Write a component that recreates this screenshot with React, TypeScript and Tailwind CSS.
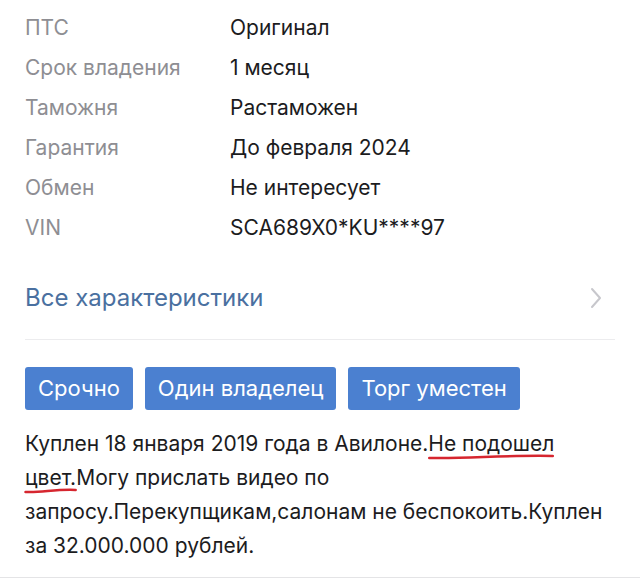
import React from "react";

const rows: [string, string][] = [
  ["ПТС", "Оригинал"],
  ["Срок владения", "1 месяц"],
  ["Таможня", "Растаможен"],
  ["Гарантия", "До февраля 2024"],
  ["Обмен", "Не интересует"],
  ["VIN", "SCA689X0*KU****97"],
];

const tags = ["Срочно", "Один владелец", "Торг уместен"];

// red marker stroke under a phrase
const Marker = ({ children }: { children: React.ReactNode }) => (
  <span className="relative">
    {children}
    <svg
      className="absolute left-0 top-full -mt-[3px] w-full h-[8px] overflow-visible"
      viewBox="0 0 100 8"
      preserveAspectRatio="none"
    >
      <path
        d="M1 5 C 30 6, 60 2, 99 3"
        stroke="#d6262f"
        strokeWidth="2.5"
        fill="none"
        strokeLinecap="round"
        vectorEffect="non-scaling-stroke"
      />
    </svg>
  </span>
);

export default function App() {
  return (
    <div
      className="w-[640px] h-[579px] bg-white overflow-hidden"
      style={{ fontFamily: "Inter, 'Liberation Sans', sans-serif" }}
    >
      <div className="px-[25px] pt-[8px] border-b border-[#e4e4e6] h-[578px]">
        {/* specs */}
        <div className="flex flex-col">
          {rows.map(([k, v]) => (
            <div key={k} className="flex items-center h-[40px] text-[21px]">
              <span className="w-[205px] text-[#8e8e93]">{k}</span>
              <span className="text-[#1c1c1e]">{v}</span>
            </div>
          ))}
        </div>

        {/* all specs link */}
        <div className="flex items-center justify-between h-[92px] pt-[8px] border-b border-[#ececee]">
          <span className="text-[24px] text-[#4a70a0]">Все характеристики</span>
          <svg className="mr-[13px]" width="12" height="22" viewBox="0 0 12 22">
            <path
              d="M2 2 L10 11 L2 20"
              stroke="#c7c7cc"
              strokeWidth="2"
              fill="none"
              strokeLinecap="round"
              strokeLinejoin="round"
            />
          </svg>
        </div>

        {/* tags */}
        <div className="flex gap-[12px] mt-[27px]">
          {tags.map((t) => (
            <span
              key={t}
              className="h-[43px] px-[13px] flex items-center rounded-[3px] bg-[#4b80d0] text-white text-[22px]"
            >
              {t}
            </span>
          ))}
        </div>

        {/* description */}
        <p className="mt-[17px] text-[21px] leading-[34px] text-[#1c1c1e]">
          Куплен 18 января 2019 года в Авилоне.<Marker>Не подошел</Marker>
          <br />
          <Marker>цвет.</Marker>Могу прислать видео по
          <br />
          запросу.Перекупщикам,салонам не беспокоить.Куплен
          <br />
          за 32.000.000 рублей.
        </p>
      </div>
    </div>
  );
}
